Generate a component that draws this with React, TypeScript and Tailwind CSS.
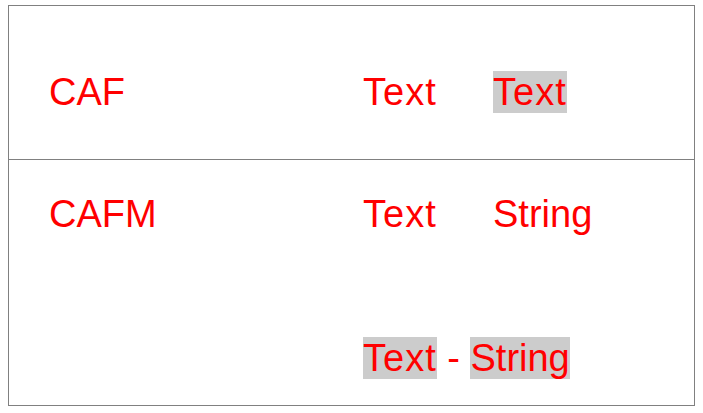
const font = { fontFamily: '"Liberation Sans", Arial, sans-serif' };

const Hl = ({ children, wide }: { children: string, wide?: boolean }) =>
    <span className={wide ? "bg-[#cccccc] tracking-[1px]" : "bg-[#cccccc]"}>{children}</span>;

export default function App() {
    return <div className="bg-white w-[703px] h-[413px] pt-[5px] pl-[8px]" style={font}>
        <div className="w-[687px] h-[401px] border border-[#808080] flex flex-col text-[38px] leading-[42px] text-[#ff0000]">
            <div className="h-[153px] flex pl-[40px] pt-[65px]">
                <div className="w-[314px]">CAF</div>
                <div className="w-[130px] tracking-[1px]">Text</div>
                <div><Hl wide>Text</Hl></div>
            </div>
            <div className="flex-1 border-t border-[#808080] flex pl-[40px] pt-[33px]">
                <div className="w-[314px]">CAFM</div>
                <div className="flex flex-col gap-[102px]">
                    <div className="flex">
                        <div className="w-[130px] tracking-[1px]">Text</div>
                        <div>String</div>
                    </div>
                    <div className="whitespace-pre"><Hl wide>Text</Hl>{" - "}<Hl>String</Hl></div>
                </div>
            </div>
        </div>
    </div>
}
